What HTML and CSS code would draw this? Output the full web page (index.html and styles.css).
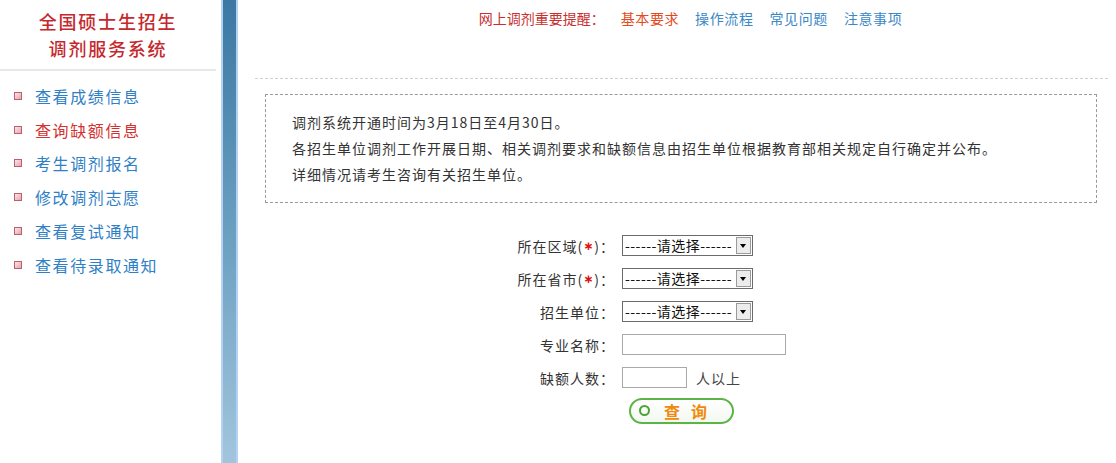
FILE: index.html
```html
<!DOCTYPE html>
<html lang="zh-CN">
<head>
<meta charset="utf-8">
<title>全国硕士生招生调剂服务系统</title>
<link rel="stylesheet" href="styles.css">
</head>
<body>
<div class="page">
  <aside class="sidebar">
    <div class="title">全国硕士生招生<br>调剂服务系统</div>
    <ul class="menu">
      <li><span class="dot"></span><a href="#">查看成绩信息</a></li>
      <li class="active"><span class="dot"></span><a href="#">查询缺额信息</a></li>
      <li><span class="dot"></span><a href="#">考生调剂报名</a></li>
      <li><span class="dot"></span><a href="#">修改调剂志愿</a></li>
      <li><span class="dot"></span><a href="#">查看复试通知</a></li>
      <li><span class="dot"></span><a href="#">查看待录取通知</a></li>
    </ul>
  </aside>
  <div class="divider"></div>
  <main class="main">
    <header class="header">
      <nav class="nav">
        <span class="nav-label">网上调剂重要提醒：</span>
        <a href="#" class="nav-hot">基本要求</a>
        <a href="#">操作流程</a>
        <a href="#">常见问题</a>
        <a href="#">注意事项</a>
      </nav>
    </header>
    <div class="notice">
      <p>调剂系统开通时间为3月18日至4月30日。</p>
      <p>各招生单位调剂工作开展日期、相关调剂要求和缺额信息由招生单位根据教育部相关规定自行确定并公布。</p>
      <p>详细情况请考生咨询有关招生单位。</p>
    </div>
    <form class="form">
      <label class="lbl">所在区域(<span class="req">∗</span>)：</label>
      <div class="ctl"><span class="sel"><span class="sel-text">------请选择------</span><span class="sel-btn"></span></span></div>
      <label class="lbl">所在省市(<span class="req">∗</span>)：</label>
      <div class="ctl"><span class="sel"><span class="sel-text">------请选择------</span><span class="sel-btn"></span></span></div>
      <label class="lbl">招生单位：</label>
      <div class="ctl"><span class="sel"><span class="sel-text">------请选择------</span><span class="sel-btn"></span></span></div>
      <label class="lbl">专业名称：</label>
      <div class="ctl"><input class="txt txt-long" type="text"></div>
      <label class="lbl">缺额人数：</label>
      <div class="ctl"><input class="txt txt-short" type="text"><span class="unit">人以上</span></div>
      <div class="btn-row"><button type="button" class="btn"><span class="btn-ring"></span><span class="btn-t">查</span><span class="btn-t">询</span></button></div>
    </form>
  </main>
</div>
</body>
</html>
```
FILE: styles.css
```css
html, body {
  margin: 0;
  padding: 0;
  background: #fff;
  font-family: "Noto Sans CJK SC", "Liberation Sans", sans-serif;
  font-size: 14px;
  color: #333;
}
a { text-decoration: none; }
.page {
  display: flex;
  height: 463px;
  overflow: hidden;
}
.sidebar {
  width: 221px;
  flex: none;
}
.title {
  width: 216px;
  text-align: center;
  font-size: 18px;
  font-weight: 500;
  color: #c5292e;
  letter-spacing: 1.8px;
  line-height: 27px;
  padding: 8px 0 7px;
  border-bottom: 2px solid #e8e8e8;
}
.menu {
  list-style: none;
  margin: 0;
  padding: 8px 0 0 14px;
}
.menu li {
  display: flex;
  align-items: center;
  height: 33.8px;
  font-size: 16px;
  letter-spacing: 1.6px;
}
.menu a { color: #2f7fc6; }
.menu li.active a { color: #d4312f; }
.dot {
  width: 6px;
  height: 6px;
  border: 1px solid #b9606c;
  background: linear-gradient(135deg, #fbe4e8, #e7a5b0);
  margin-right: 13px;
  flex: none;
}
.divider {
  width: 13px;
  flex: none;
  border-left: 2px solid #b4d0f2;
  border-right: 2px solid #b4d0f2;
  background: linear-gradient(to bottom, #3c78a3, #6a9fc0 50%, #a2c5dd);
}
.main {
  flex: 1;
  padding: 0 8px 0 17px;
}
.header {
  height: 78px;
  border-bottom: 1px dashed #cfcfcf;
}
.nav {
  display: flex;
  justify-content: center;
  align-items: center;
  height: 36px;
  padding-left: 18px;
  font-size: 14px;
}
.nav-label { color: #c8302f; margin-right: 16px; }
.nav a { color: #3a88c8; margin-right: 16px; letter-spacing: 0.6px; }
.nav a:last-child { margin-right: 0; }
.nav a.nav-hot { color: #e5481c; }
.notice {
  margin: 15px 11px 0 10px;
  border: 1px dashed #9a9a9a;
  padding: 14px 26px 15px;
  color: #333;
  font-size: 14px;
  letter-spacing: 1px;
}
.notice p {
  margin: 0;
  line-height: 26px;
}
.form {
  display: grid;
  grid-template-columns: 120px auto;
  grid-auto-rows: 33px;
  column-gap: 7px;
  margin: 26px 0 0 240px;
}
.lbl {
  display: flex;
  align-items: center;
  justify-content: flex-end;
  color: #333;
  letter-spacing: 1px;
  white-space: nowrap;
}
.req {
  color: #e01010;
  font-family: "DejaVu Sans", sans-serif;
  font-size: 12px;
  font-weight: bold;
}
.ctl {
  display: flex;
  align-items: center;
}
.sel {
  box-sizing: border-box;
  width: 131px;
  height: 21px;
  border: 1px solid #6b6b6b;
  display: flex;
  align-items: center;
  background: #fff;
}
.sel-text {
  flex: 1;
  font-size: 14px;
  color: #111;
  line-height: 19px;
  padding-left: 2px;
  white-space: nowrap;
  overflow: hidden;
  letter-spacing: 0.45px;
}
.sel-btn {
  box-sizing: border-box;
  width: 15px;
  height: 17px;
  margin-right: 1px;
  border: 1px solid #9a9a9a;
  background: #ececec;
  position: relative;
  flex: none;
}
.sel-btn::after {
  content: "";
  position: absolute;
  left: 3px;
  top: 6px;
  border-left: 3.5px solid transparent;
  border-right: 3.5px solid transparent;
  border-top: 4px solid #000;
}
.txt {
  box-sizing: border-box;
  height: 21px;
  border: 1px solid #a9a9a9;
  padding: 0 2px;
  margin: 0;
  font: inherit;
  outline: none;
}
.txt-long { width: 164px; }
.txt-short { width: 65px; }
.unit {
  margin-left: 9px;
  color: #444;
  letter-spacing: 1px;
}
.btn-row {
  grid-column: 2;
  display: flex;
  align-items: center;
}
.btn {
  box-sizing: border-box;
  width: 105px;
  height: 26px;
  margin-left: 7px;
  border: 2px solid #5bb446;
  border-radius: 13px;
  background: linear-gradient(#ffffff, #f3f8f1);
  display: flex;
  align-items: center;
  padding: 0 0 0 8px;
  font-family: "Noto Sans CJK SC", sans-serif;
  cursor: pointer;
}
.btn-ring {
  box-sizing: border-box;
  width: 11px;
  height: 11px;
  border: 2px solid #4aa436;
  border-radius: 50%;
  margin-right: 14px;
  flex: none;
}
.btn-t {
  font-size: 16px;
  font-weight: bold;
  color: #f08a0c;
  margin-right: 11px;
  line-height: 20px;
}
```
